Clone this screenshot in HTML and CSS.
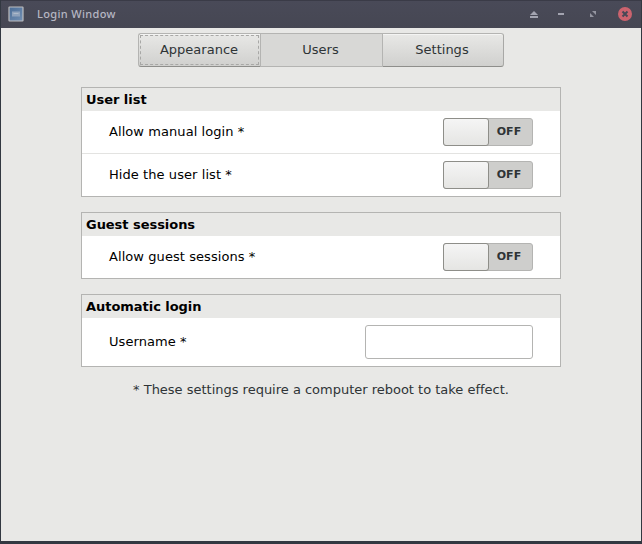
FILE: index.html
```html
<!DOCTYPE html>
<html lang="en">
<head>
<meta charset="utf-8">
<title>Login Window</title>
<link rel="stylesheet" href="styles.css">
</head>
<body>
<div class="window">
  <header class="titlebar">
    <svg class="app-icon" width="16" height="16" viewBox="0 0 16 16">
      <defs><linearGradient id="sky" x1="0" y1="0" x2="1" y2="1"><stop offset="0" stop-color="#4a6c96"/><stop offset="1" stop-color="#7390b3"/></linearGradient></defs>
      <rect x="1" y="1" width="14" height="14" rx="0.5" fill="url(#sky)" stroke="#bdbdbf" stroke-width="1.2"/>
      <rect x="4" y="5.5" width="8" height="5" fill="#8fa2bb"/>
      <path d="M5.500 7.500h5" stroke="#aebaca"/>
    </svg>
    <h1 class="title">Login Window</h1>
    <svg class="controls" width="112" height="28" viewBox="0 0 112 28">
      <path d="M4 15L8 11L12 15Z M4 16h8v2h-8Z" fill="#a3a4b0"/>
      <path d="M32 13h6v2h-6Z" fill="#a3a4b0"/>
      <path d="M66 11h4v4Z M64 13v4h4Z" fill="#9495a0"/>
      <circle cx="99" cy="14" r="7" fill="#cc636e"/>
      <path d="M96.5 11.5l5 5m0-5l-5 5" stroke="#474856" stroke-width="2"/>
    </svg>
  </header>
  <main class="content">
    <nav class="tabs">
      <button class="tab focused"><span>Appearance</span></button>
      <button class="tab active"><span>Users</span></button>
      <button class="tab"><span>Settings</span></button>
    </nav>
    <section class="panel">
      <h2>User list</h2>
      <div class="row"><span>Allow manual login *</span><div class="switch"><i></i><b>OFF</b></div></div>
      <div class="row divided"><span>Hide the user list *</span><div class="switch"><i></i><b>OFF</b></div></div>
    </section>
    <section class="panel">
      <h2>Guest sessions</h2>
      <div class="row"><span>Allow guest sessions *</span><div class="switch"><i></i><b>OFF</b></div></div>
    </section>
    <section class="panel">
      <h2>Automatic login</h2>
      <div class="row tall"><label for="username">Username *</label><input id="username" type="text"></div>
    </section>
    <p class="note">* These settings require a computer reboot to take effect.</p>
  </main>
</div>
</body>
</html>
```
FILE: styles.css
```css
* { box-sizing: border-box; }
body {
  margin: 0;
  background: #323841;
  font: 13px/16px "DejaVu Sans", sans-serif;
  color: #2e3436;
}
.window {
  height: 544px;
  padding: 0 1px 3px;
  display: flex;
  flex-direction: column;
}
.titlebar {
  height: 28px;
  flex: none;
  display: flex;
  align-items: center;
  padding-left: 7px;
  background: linear-gradient(#494a58, #464753);
  border-top: 1px solid #3a3b47;
}
.app-icon { margin-top: -1px; }
.title {
  margin: -2px auto 0 13px;
  font: 500 11px/16px "Noto Sans", sans-serif;
  letter-spacing: 0.35px;
  color: #b6b7c3;
}
.controls { margin: -1px 3px 0 0; }
.content {
  flex: 1;
  display: flex;
  flex-direction: column;
  align-items: center;
  padding-top: 5px;
  background: #e8e8e6;
}
.tabs { display: flex; width: 366px; height: 34px; margin-bottom: 20px; }
.tab {
  width: 122px;
  padding: 1px;
  border: 1px solid #b4b4b2;
  border-bottom-color: #8e8e8b;
  border-right: 0;
  background: linear-gradient(#e8e8e6, #d0d0ce);
  box-shadow: inset 0 1px #f4f4f3;
  font: inherit;
  color: inherit;
}
.tab:first-child { border-radius: 3px 0 0 3px; }
.tab:last-child { border-right: 1px solid #a8a8a6; border-radius: 0 3px 3px 0; }
.tab.active { background: #d8d8d6; border-color: #b4b4b2; box-shadow: none; }
.tab span {
  display: flex;
  align-items: center;
  justify-content: center;
  height: 100%;
  padding-right: 2px;
}
.tab.focused span { border: 1px dashed #a8a8a6; padding-right: 1px; }
.panel {
  width: 480px;
  border: 1px solid #b4b4b2;
  background: #fff;
  margin-bottom: 15px;
  color: #000;
}
.panel h2 {
  margin: 0;
  height: 23px;
  padding: 4px 4px 0;
  background: #e8e8e6;
  font: bold 13px/16px "DejaVu Sans", sans-serif;
  letter-spacing: -0.04px;
}
.row {
  height: 42px;
  padding: 0 27px;
  display: flex;
  align-items: center;
  justify-content: space-between;
  letter-spacing: 0.07px;
}
.row.tall { height: 48px; }
.row.divided { height: 43px; border-top: 1px solid #e3e3e1; }
.switch {
  width: 90px;
  height: 28px;
  display: flex;
  border: 1px solid #b4b4b2;
  border-radius: 3px;
  background: #cececc;
}
.switch i {
  width: 46px;
  margin: -1px 0 -1px -1px;
  border: 1px solid #8e8e89;
  border-radius: 3px;
  background: linear-gradient(#f5f5f5, #e5e5e3);
}
.switch b {
  flex: 1;
  padding-right: 3px;
  text-align: center;
  font-size: 11px;
  line-height: 25px;
  color: #2e3436;
}
input {
  width: 168px;
  height: 34px;
  padding: 0 6px;
  border: 1px solid #b4b4b2;
  border-radius: 3px;
  background: #fff;
  font: inherit;
}
.note { margin: 0; letter-spacing: -0.01px; }
```
